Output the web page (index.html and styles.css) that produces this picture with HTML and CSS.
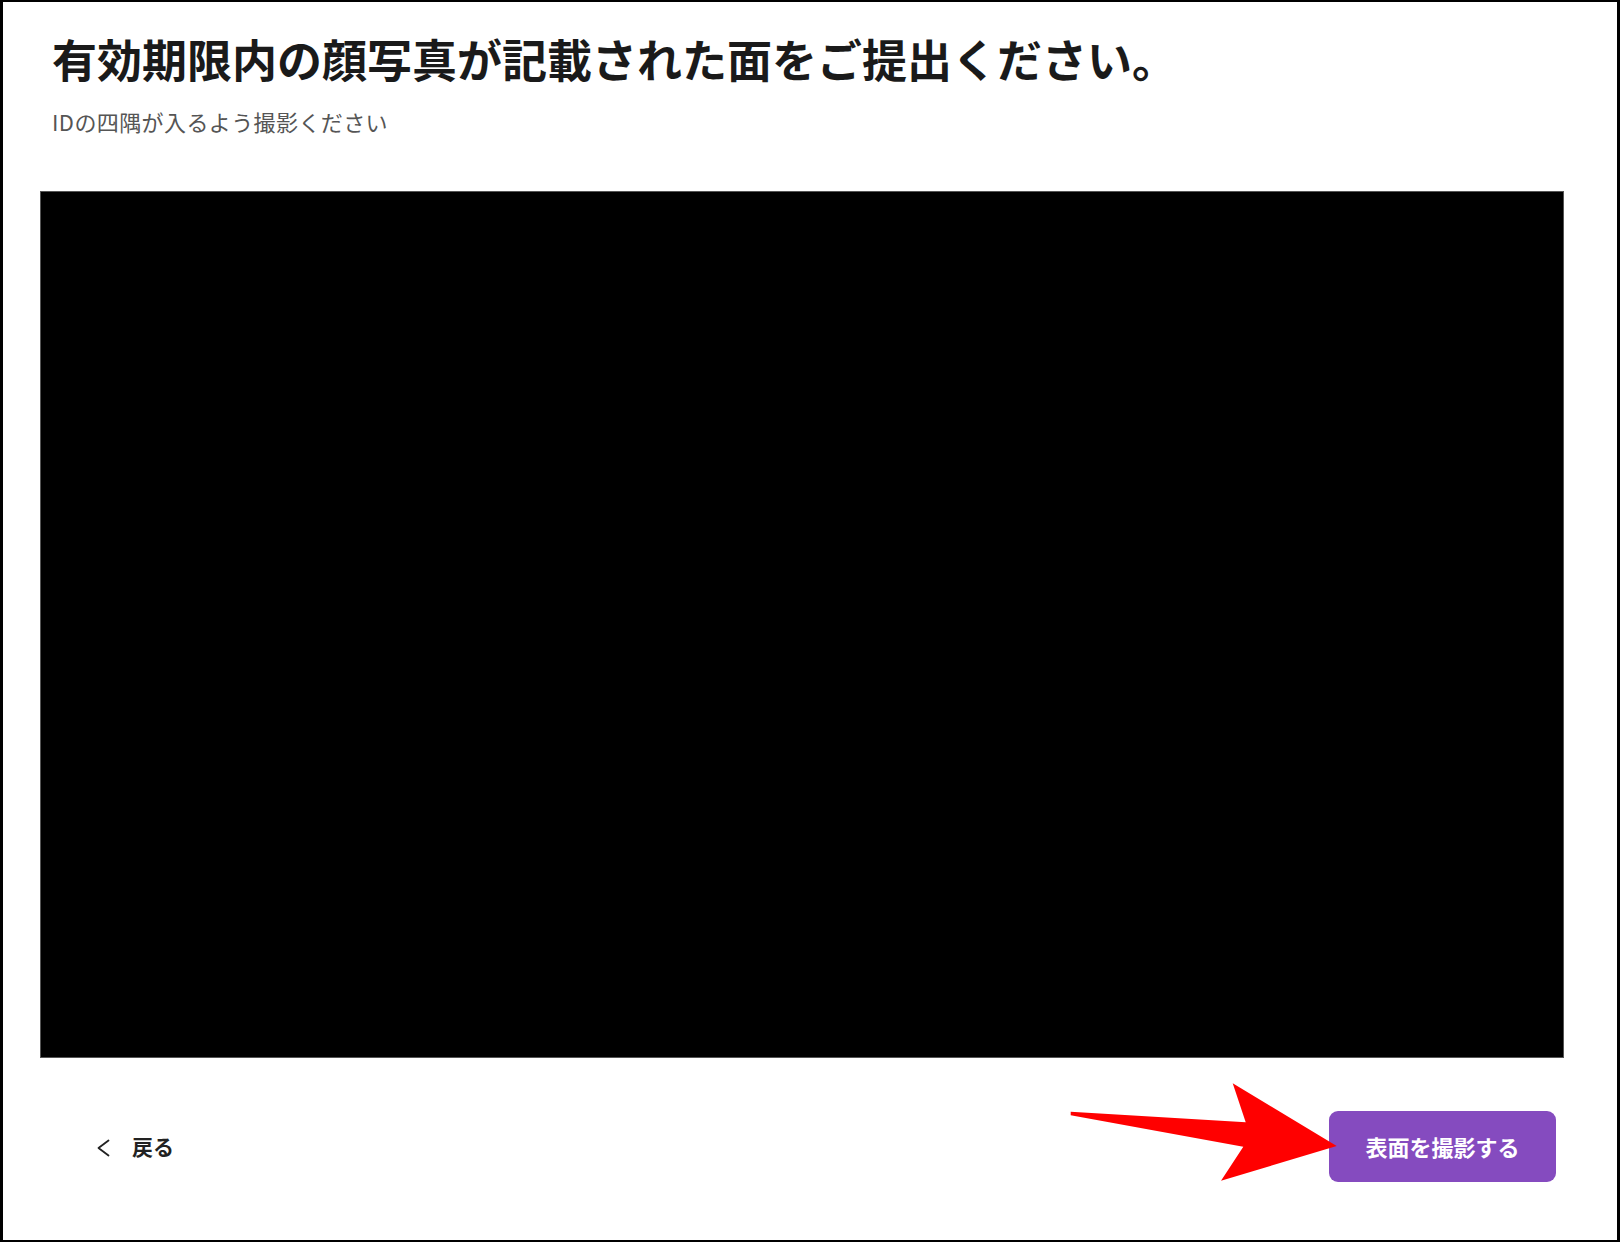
FILE: index.html
```html
<!DOCTYPE html>
<html lang="ja">
<head>
<meta charset="utf-8">
<title>ID撮影</title>
<link rel="stylesheet" href="styles.css">
</head>
<body>
<div class="frame">
  <header class="header">
    <h1 class="title">有効期限内の顔写真が記載された面をご提出ください。</h1>
    <p class="subtitle">IDの四隅が入るよう撮影ください</p>
  </header>
  <div class="camera"></div>
  <footer class="footer">
    <a class="back" href="#">
      <svg class="chev" width="15" height="18" viewBox="0 0 15 18" aria-hidden="true">
        <path d="M12.5 1.5 L2.5 9 L12.5 16.5" fill="none" stroke="#222" stroke-width="1.8" stroke-linecap="round" stroke-linejoin="round"/>
      </svg>
      <span>戻る</span>
    </a>
    <button class="capture" type="button">表面を撮影する</button>
  </footer>
  <svg class="arrow" width="1620" height="1242" viewBox="0 0 1620 1242" aria-hidden="true">
    <polygon fill="#ff0000" points="1070.7,1111.7 1245.7,1122.3 1232.7,1083.3 1336.7,1146 1221,1180.7 1243.3,1146.7 1070.7,1115.3"/>
  </svg>
</div>
</body>
</html>
```

FILE: styles.css
```css
html, body {
  margin: 0;
  padding: 0;
  background: #fff;
}

body {
  font-family: "Noto Sans CJK JP", "Noto Sans", sans-serif;
  color: #1a1a1a;
}

.frame {
  position: relative;
  width: 1620px;
  height: 1242px;
  box-sizing: border-box;
  border-style: solid;
  border-color: #000;
  border-width: 2px 3px 2px 3px;
  display: flex;
  flex-direction: column;
  overflow: hidden;
}

.header {
  padding: 24px 0 0 49px;
}

.title {
  margin: 0;
  font-size: 45px;
  line-height: 66px;
  font-weight: 700;
  color: #1a1a1a;
  letter-spacing: 0;
}

.subtitle {
  margin: 13px 0 0 0;
  font-size: 22px;
  line-height: 33px;
  font-weight: 400;
  color: #555;
  letter-spacing: 0.4px;
}

.camera {
  margin: 53px 0 0 37px;
  width: 1524px;
  height: 867px;
  box-sizing: border-box;
  background: #000;
  border: 1px solid #555;
}

.footer {
  flex: 1;
  display: flex;
  align-items: center;
  justify-content: space-between;
  padding: 0 61px 6px 93px;
}

.back {
  display: flex;
  align-items: center;
  gap: 21px;
  text-decoration: none;
  color: #222;
  font-size: 21px;
  font-weight: 700;
  line-height: 1;
}

.chev {
  display: block;
  margin-top: 3px;
}

.capture {
  width: 227px;
  height: 71px;
  border: none;
  border-radius: 9px;
  background: #854bbf;
  color: #fff;
  font-family: "Noto Sans CJK JP", "Noto Sans", sans-serif;
  font-size: 22px;
  font-weight: 700;
  cursor: pointer;
}

.arrow {
  position: absolute;
  left: -3px;
  top: -2px;
  pointer-events: none;
}
```
